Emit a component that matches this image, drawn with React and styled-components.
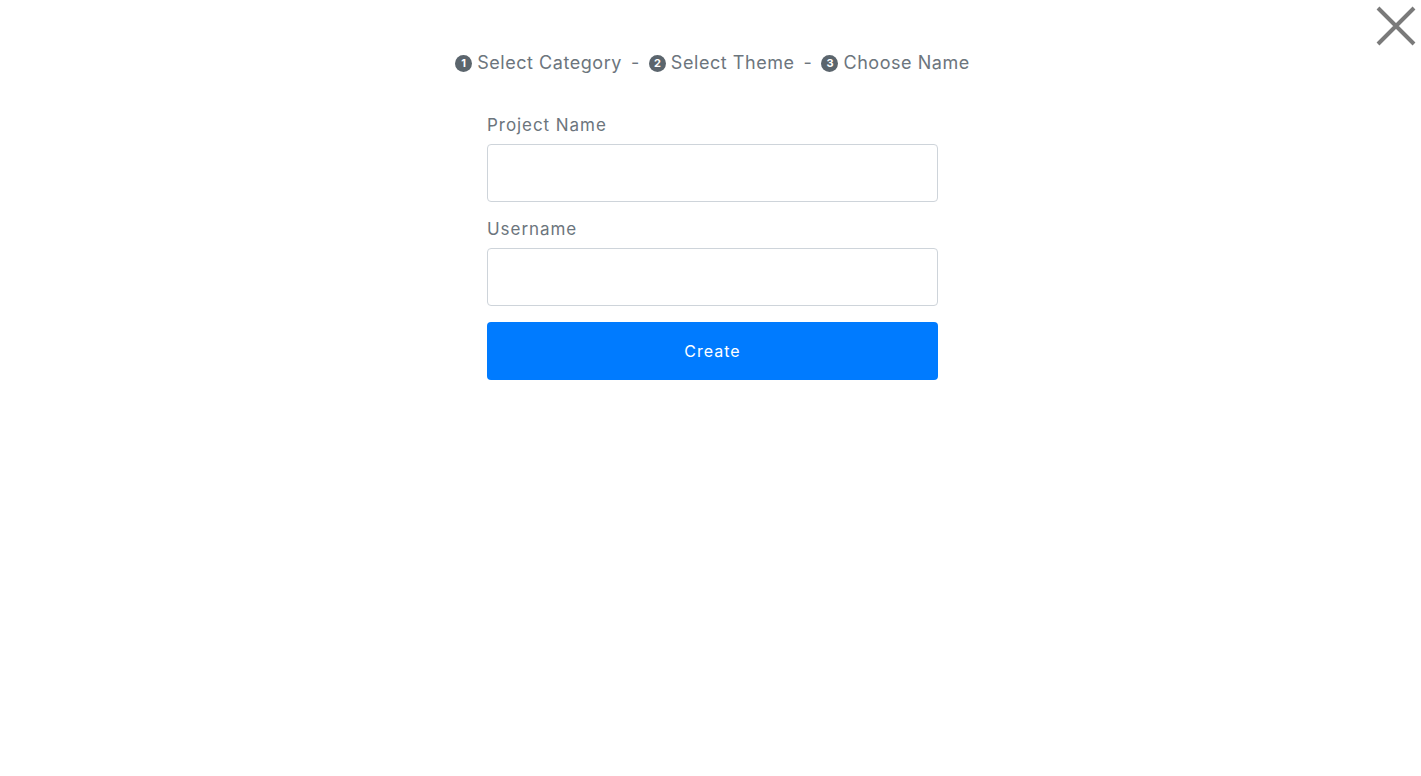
import React from "react";
import styled, { createGlobalStyle } from "styled-components";

const Global = createGlobalStyle`
  html, body { margin: 0; padding: 0; background: #fff; }
  body { font-family: Inter, "Open Sans", sans-serif; color: #6c757d; }
  * { box-sizing: border-box; }
`;

const Page = styled.div`
  position: relative;
  min-height: 776px;
  display: flex;
  flex-direction: column;
  align-items: center;
  padding: 50px 0 0 4px;
`;

const CloseButton = styled.button`
  position: absolute;
  top: 6px;
  right: 5px;
  width: 40px;
  height: 40px;
  padding: 0;
  border: 0;
  background: transparent;
  cursor: pointer;
`;

const Steps = styled.div`
  display: flex;
  align-items: center;
  font-size: 18px;
  line-height: 26px;
  color: #6c757d;
  letter-spacing: 0.55px;
`;

const Step = styled.span`
  display: inline-flex;
  align-items: center;
  gap: 5px;
`;

const Badge = styled.span`
  width: 17px;
  height: 17px;
  border-radius: 50%;
  background: #5b656d;
  color: #fff;
  font-size: 11px;
  font-weight: 700;
  letter-spacing: 0;
  display: inline-flex;
  align-items: center;
  justify-content: center;
  line-height: 1;
`;

const Dash = styled.span`
  margin: 0 9px;
`;

const Form = styled.form`
  width: 451px;
  margin-top: 37px;
  display: flex;
  flex-direction: column;
`;

const Label = styled.label`
  font-size: 17px;
  line-height: 24px;
  color: #6c757d;
  margin-bottom: 7px;
  letter-spacing: 0.95px;
`;

const Input = styled.input`
  height: 58px;
  width: 100%;
  border: 1px solid #ced4da;
  border-radius: 4px;
  padding: 0 12px;
  font-size: 16px;
  font-family: inherit;
  margin-bottom: ${(p) => p.$mb || 0}px;
  outline: none;
`;

const Submit = styled.button`
  height: 58px;
  width: 100%;
  border: 0;
  border-radius: 4px;
  background: #007bff;
  color: #fff;
  font-family: inherit;
  font-size: 16px;
  letter-spacing: 1px;
  cursor: pointer;
`;

export default function App() {
  const steps = ["Select Category", "Select Theme", "Choose Name"];
  return (
    <>
      <Global />
      <Page>
        <CloseButton aria-label="Close">
          <svg width="40" height="40" viewBox="0 0 40 40">
            <path d="M2 2 L38 38 M38 2 L2 38" stroke="#7a7a7a" strokeWidth="4" />
          </svg>
        </CloseButton>
        <Steps>
          {steps.map((s, i) => (
            <React.Fragment key={s}>
              {i > 0 && <Dash>-</Dash>}
              <Step>
                <Badge>{i + 1}</Badge>
                {s}
              </Step>
            </React.Fragment>
          ))}
        </Steps>
        <Form onSubmit={(e) => e.preventDefault()}>
          <Label>Project Name</Label>
          <Input $mb={15} />
          <Label>Username</Label>
          <Input $mb={16} />
          <Submit type="submit">Create</Submit>
        </Form>
      </Page>
    </>
  );
}
